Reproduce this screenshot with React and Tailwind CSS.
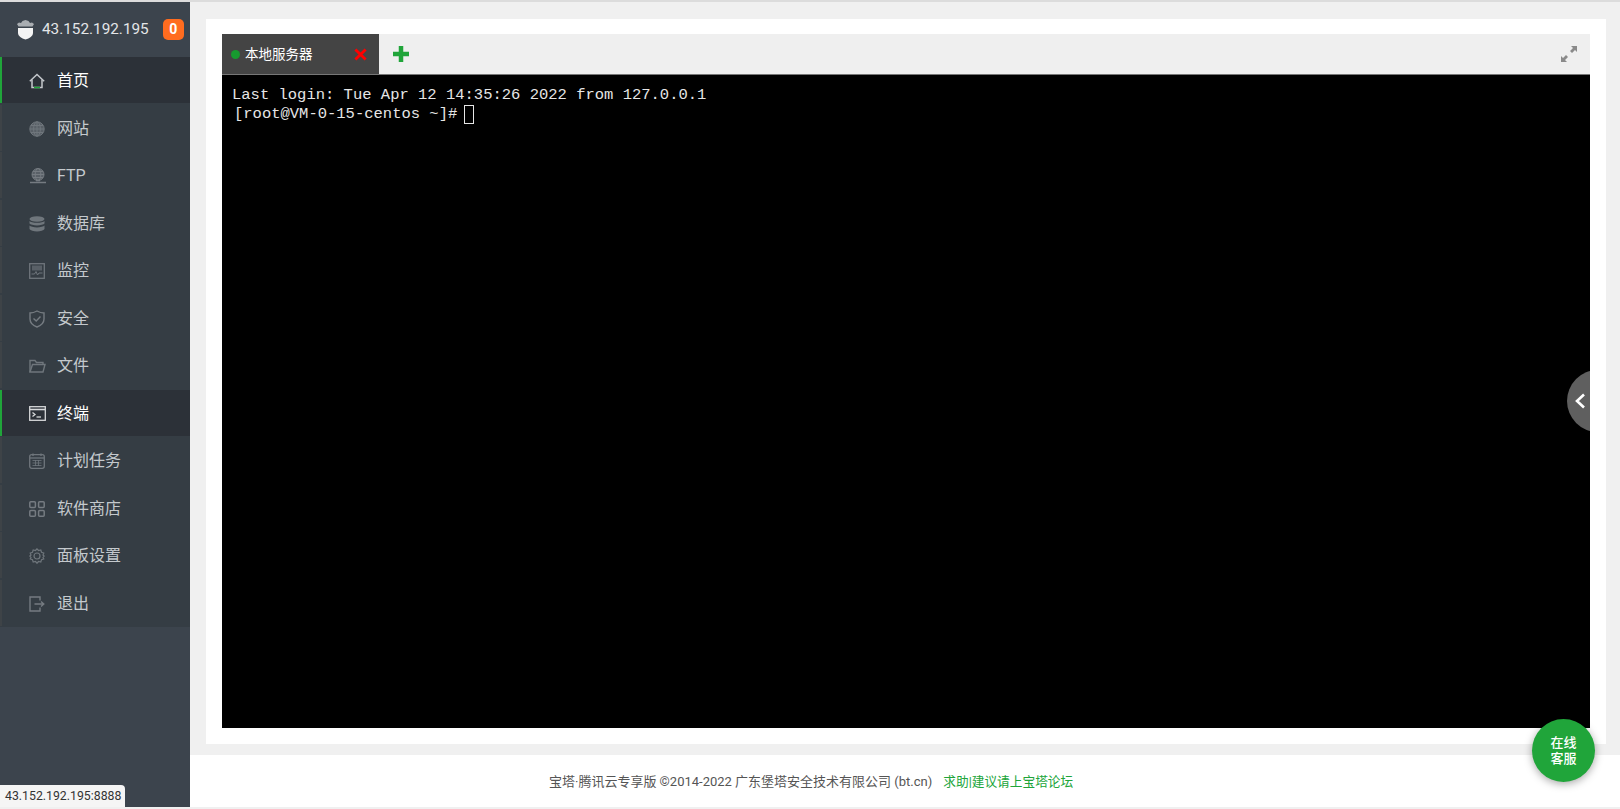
const HomeIcon = () => (
    <svg width="16" height="16" viewBox="0 0 16 16" fill="none">
        <path d="M.8 8.2 L8 1.5 L15.2 8.2" stroke="#c4c8cc" strokeWidth="1.5" />
        <path d="M3 6.5 V14.5 H13 V6.5" stroke="#c4c8cc" strokeWidth="1.5" />
        <path d="M5 14.5 H11" stroke="#20a53a" strokeWidth="1.5" />
    </svg>
);
const GlobeIcon = () => (
    <svg width="16" height="16" viewBox="0 0 16 16" fill="none" stroke="#6f767c" strokeWidth="1">
        <circle cx="8" cy="8" r="7.2" fill="#596067" />
        <ellipse cx="8" cy="8" rx="3.4" ry="7.2" />
        <path d="M8 1 V15 M1 8 H15 M2 4.5 H14 M2 11.5 H14" />
    </svg>
);
const FtpIcon = () => (
    <svg width="18" height="16" viewBox="0 0 18 16" fill="none" stroke="#757b81" strokeWidth="1">
        <circle cx="9" cy="6.5" r="6" fill="#596067" />
        <ellipse cx="9" cy="6.5" rx="2.8" ry="6" />
        <path d="M3 6.5 H15 M4 3.5 H14 M4 9.5 H14" />
        <path d="M1 14.5 H17 M7 12.5 H11" strokeWidth="1.4" />
    </svg>
);
const DbIcon = () => (
    <svg width="16" height="16" viewBox="0 0 16 16" fill="#6f767c">
        <ellipse cx="8" cy="3" rx="7.5" ry="2.8" />
        <path d="M.5 5 C2 7.4 14 7.4 15.5 5 V7.6 C14 10 2 10 .5 7.6 Z" />
        <path d="M.5 9.6 C2 12 14 12 15.5 9.6 V13 C14 16.2 2 16.2 .5 13 Z" />
    </svg>
);
const MonitorIcon = () => (
    <svg width="16" height="16" viewBox="0 0 16 16" fill="none" stroke="#6f767c">
        <rect x=".7" y=".7" width="14.6" height="14.6" strokeWidth="1.3" />
        <rect x="3" y="2.5" width="10" height="5" fill="#596067" stroke="none" />
        <path d="M2.5 11 H5.5 L7 8.5 L8.5 12 L10 10 H13.5" strokeWidth="1" />
    </svg>
);
const ShieldIcon = () => (
    <svg width="16" height="18" viewBox="0 0 16 18" fill="none" stroke="#757b81" strokeWidth="1.4">
        <path d="M8 1 C10.5 2.4 12.5 3 15 3 V9 C15 13 12 15.5 8 17 C4 15.5 1 13 1 9 V3 C3.5 3 5.5 2.4 8 1 Z" />
        <path d="M4.5 8.5 L7.2 11 L11.5 6.5" />
    </svg>
);
const FolderIcon = () => (
    <svg width="17" height="14" viewBox="0 0 17 14" fill="none" stroke="#6f767c" strokeWidth="1.4">
        <path d="M1 13 V1.5 H6 L7.5 3.5 H14 V5.5" />
        <path d="M1 13 L3.5 5.5 H16 L14 13 Z" />
    </svg>
);
const TerminalIcon = () => (
    <svg width="17" height="15" viewBox="0 0 17 15" fill="none" stroke="#d6d8da">
        <rect x=".7" y=".7" width="15.6" height="13.6" strokeWidth="1.3" />
        <path d="M1 3.5 H16" strokeWidth="1.6" />
        <path d="M3.5 6.5 L6 8.5 L3.5 10.5" strokeWidth="1.3" />
        <path d="M7.5 11 H12" strokeWidth="1.3" />
    </svg>
);
const CalendarIcon = () => (
    <svg width="16" height="16" viewBox="0 0 16 16" fill="none" stroke="#6f767c">
        <rect x=".7" y="1.7" width="14.6" height="13.6" rx="2" strokeWidth="1.3" />
        <path d="M1 5 H15" strokeWidth="1.3" />
        <path d="M4 .5 V3 M12 .5 V3" strokeWidth="1.3" />
        <path d="M3.5 7.5 H12.5 M3.5 10 H12.5 M3.5 12.5 H12.5 M6.5 7 V13 M9.5 7 V13" strokeWidth=".8" />
    </svg>
);
const AppsIcon = () => (
    <svg width="16" height="16" viewBox="0 0 16 16" fill="none" stroke="#757b81" strokeWidth="1.5">
        <rect x=".8" y=".8" width="5.6" height="5.6" rx="1" />
        <rect x="9.6" y=".8" width="5.6" height="5.6" rx="1" />
        <rect x=".8" y="9.6" width="5.6" height="5.6" rx="1" />
        <rect x="9.6" y="9.6" width="5.6" height="5.6" rx="1" />
    </svg>
);
const GearIcon = () => (
    <svg width="16" height="16" viewBox="0 0 16 16" fill="none" stroke="#6f767c">
        <path d="M8 .8 L9.5 2.5 L11.8 2 L12.5 4.2 L14.8 5 L14 7 L15.2 8 L14 9.5 L14.8 11 L12.5 11.8 L11.8 14 L9.5 13.5 L8 15.2 L6.5 13.5 L4.2 14 L3.5 11.8 L1.2 11 L2 9.5 L.8 8 L2 7 L1.2 5 L3.5 4.2 L4.2 2 L6.5 2.5 Z" strokeWidth="1.2" />
        <circle cx="8" cy="8" r="3" strokeWidth="1.2" />
    </svg>
);
const LogoutIcon = () => (
    <svg width="16" height="16" viewBox="0 0 16 16" fill="none" stroke="#757b81" strokeWidth="1.4">
        <path d="M11 4.5 V1 H1 V15 H11 V11.5" />
        <path d="M5.5 8 H14.5 M12 5.5 L14.8 8 L12 10.5" />
    </svg>
);

const menuItems = [
    { label: '首页', icon: HomeIcon, active: true },
    { label: '网站', icon: GlobeIcon },
    { label: 'FTP', icon: FtpIcon },
    { label: '数据库', icon: DbIcon },
    { label: '监控', icon: MonitorIcon },
    { label: '安全', icon: ShieldIcon },
    { label: '文件', icon: FolderIcon },
    { label: '终端', icon: TerminalIcon, active: true },
    { label: '计划任务', icon: CalendarIcon },
    { label: '软件商店', icon: AppsIcon },
    { label: '面板设置', icon: GearIcon },
    { label: '退出', icon: LogoutIcon },
];

function Sidebar() {
    return (
        <aside className="w-[190px] shrink-0 bg-[#3c444d] flex flex-col">
            <div className="h-[55px] flex items-center pl-[16px] shrink-0">
                <svg width="19" height="21" viewBox="0 0 19 21" className="shrink-0">
                    <path d="M1 5 L3 3.5 L5 4 L6.5 2 L9.5 1 L12.5 2 L14 4 L16 3.5 L18 5 L16.5 7.5 H2.5 Z" fill="#a9adb1" />
                    <path d="M2 9 H17 V14 C17 17 13.5 19.5 9.5 20.5 C5.5 19.5 2 17 2 14 Z" fill="#f4f4f4" />
                </svg>
                <span className="ml-[7px] text-[15.3px] text-[#e4e6e8]">43.152.192.195</span>
                <span className="ml-[14px] w-[21px] h-[21px] rounded-[5px] bg-[#ff6c1f] text-white text-[14px] font-bold flex items-center justify-center">0</span>
            </div>
            <nav className="bg-[#353d44] flex flex-col">
                {menuItems.map(({ label, icon: Icon, active }) => (
                    <div key={label} className="h-[47.5px]">
                        <div className={`h-[46px] pt-[2px] flex items-center border-l-2 ${active ? 'bg-[#2c3138] border-[#20a53a] text-white' : 'border-[#3e4347] text-[#c4c9cd]'}`}>
                            <span className="w-[55px] pl-[27px] shrink-0 flex items-center"><Icon /></span>
                            <span className="text-[16px]">{label}</span>
                        </div>
                    </div>
                ))}
            </nav>
        </aside>
    );
}

function Terminal() {
    return (
        <div className="flex-1 min-h-0 bg-black pt-[11px] pl-[10px] font-['Liberation_Mono',monospace] text-[15.5px] leading-[19px] text-[#e6e6e6] border-t border-[#777]">
            <div className="whitespace-pre">Last login: Tue Apr 12 14:35:26 2022 from 127.0.0.1</div>
            <div className="flex whitespace-pre pl-[2px]">
                <span>[root@VM-0-15-centos ~]#</span>
                <span className="w-[10px] h-[19px] border border-[#e6e6e6] ml-[7px]" />
            </div>
        </div>
    );
}

export default function App() {
    return (
        <div className="relative h-[809px] w-full overflow-hidden flex flex-col bg-white font-['Roboto','Noto_Sans_CJK_SC',sans-serif] border-t-2 border-[#dcdcdc]">
            <div className="flex flex-1 min-h-0">
                <Sidebar />
                <main className="flex-1 min-w-0 flex flex-col">
                    <div className="h-[753px] bg-[#f0f0f0] pt-[17px] pl-[16px] pr-[14px] pb-[11px] flex shrink-0">
                        <div className="flex-1 bg-white pt-[15px] px-[16px] pb-[16px] flex flex-col min-w-0">
                            <div className="h-[40px] bg-[#efefef] flex items-center shrink-0">
                                <div className="w-[157px] h-full bg-[#444] flex items-center pl-[9px] pr-[12px]">
                                    <span className="w-[9px] h-[9px] rounded-full bg-[#179a2f] shrink-0" />
                                    <span className="ml-[5px] text-[13.5px] text-white">本地服务器</span>
                                    <svg width="13" height="13" viewBox="0 0 14 14" className="ml-auto">
                                        <path d="M1.5 1.5 L12.5 12.5 M12.5 1.5 L1.5 12.5" stroke="#ff0000" strokeWidth="3" />
                                    </svg>
                                </div>
                                <svg width="16" height="16" viewBox="0 0 16 16" className="ml-[14px]">
                                    <path d="M8 0 V16 M0 8 H16" stroke="#20a53a" strokeWidth="4.5" />
                                </svg>
                                <svg width="18" height="18" viewBox="0 0 18 18" className="ml-auto mr-[12px]">
                                    <path d="M11 1 H17 V7 L15 5 L12 8 L10 6 L13 3 Z M7 17 H1 V11 L3 13 L6 10 L8 12 L5 15 Z" fill="#8a8a8a" />
                                </svg>
                            </div>
                            <Terminal />
                        </div>
                    </div>
                    <footer className="flex-1 flex items-center pt-[2px] pl-[359px] text-[13px] text-[#555]">
                        <span>宝塔·腾讯云专享版 ©2014-2022 广东堡塔安全技术有限公司 (bt.cn)</span>
                        <span className="ml-[11px] text-[12.7px] text-[#20a53a]">求助|建议请上宝塔论坛</span>
                    </footer>
                </main>
            </div>
            <div className="h-[2px] bg-[#f0f0f0] shrink-0" />

            {/* collapse handle */}
            <div className="absolute left-[1567px] top-[368px] w-[23px] h-[62px] overflow-hidden">
                <div className="w-[62px] h-[62px] rounded-full bg-[#5f5f5f]" />
                <svg width="12" height="16" viewBox="0 0 12 16" className="absolute right-[4px] top-[23px]">
                    <path d="M10 1.5 L3 8 L10 14.5" stroke="#fff" strokeWidth="2.6" fill="none" />
                </svg>
            </div>

            {/* online support button */}
            <div className="absolute left-[1532px] top-[717px] w-[63px] h-[63px] rounded-full bg-[#20a53a] shadow-[0_2px_8px_rgba(0,0,0,0.35)] flex items-center justify-center text-center text-white text-[13px] leading-[16px] font-medium">
                在线<br />客服
            </div>

            {/* browser status bubble */}
            <div className="absolute left-0 bottom-[2px] h-[22px] w-[125px] bg-[#f5f5f5] rounded-tr-[4px] flex items-center pl-[5px] text-[12.3px] text-[#333]">
                43.152.192.195:8888
            </div>
        </div>
    );
}
